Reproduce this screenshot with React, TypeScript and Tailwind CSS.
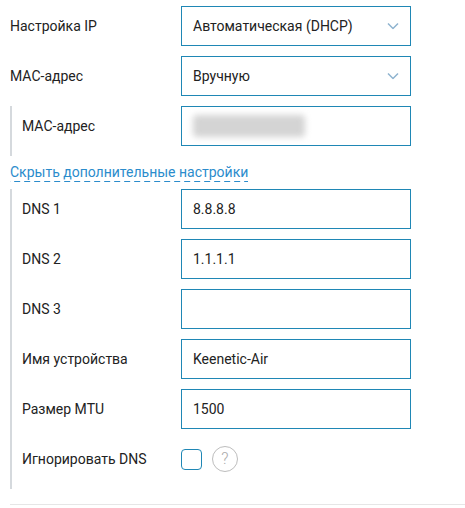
import React from "react";

const font = { fontFamily: "Roboto, 'Noto Sans', sans-serif" };

function Chevron() {
  return (
    <svg width="12" height="7" viewBox="0 0 12 7" className="absolute right-[11px] top-1/2 -translate-y-1/2">
      <path d="M1 1 L6 6 L11 1" fill="none" stroke="#8fb3cf" strokeWidth="1.5" />
    </svg>
  );
}

function Box({ children, select }: { children?: React.ReactNode; select?: boolean }) {
  return (
    <div className="relative w-[230px] h-[40px] border border-[#1f87b5] flex items-center pl-[11px] text-[14px] text-[#222]">
      {children}
      {select && <Chevron />}
    </div>
  );
}

function Row({ label, children, indent }: { label: string; children: React.ReactNode; indent?: boolean }) {
  return (
    <div className="flex items-center h-[40px] shrink-0">
      <div className={`${indent ? "w-[159px]" : "w-[171px]"} text-[14px] text-[#222]`}>{label}</div>
      {children}
    </div>
  );
}

export default function App() {
  return (
    <div className="w-[465px] h-[508px] bg-white pt-[6px] flex flex-col" style={font}>
      <div className="pl-[10px] flex flex-col">
        <div className="flex flex-col gap-[10px]">
          <Row label="Настройка IP">
            <Box select>Автоматическая (DHCP)</Box>
          </Row>
          <Row label="МАС-адрес">
            <Box select>Вручную</Box>
          </Row>
          <div className="border-l-2 border-[#d5d9dd] pl-[10px] pb-[10px] flex flex-col">
            <Row label="МАС-адрес" indent>
              <Box>
                <div className="w-[112px] h-[22px] bg-[#d4d4d4] rounded-[4px] blur-[3px]" />
              </Box>
            </Row>
          </div>
        </div>
        <div className="h-[33px] flex items-center">
          <span className="text-[14px] text-[#2b8ccc] leading-[17px] pb-[1px] bg-[linear-gradient(to_right,#2b8ccc_60%,transparent_0)] bg-[length:10px_1px] bg-repeat-x bg-bottom">
            Скрыть дополнительные настройки
          </span>
        </div>
        <div className="border-l-2 border-[#d5d9dd] pl-[10px] pb-[10px] flex flex-col gap-[10px]">
          <Row label="DNS 1" indent>
            <Box>8.8.8.8</Box>
          </Row>
          <Row label="DNS 2" indent>
            <Box>1.1.1.1</Box>
          </Row>
          <Row label="DNS 3" indent>
            <Box />
          </Row>
          <Row label="Имя устройства" indent>
            <Box>Keenetic-Air</Box>
          </Row>
          <Row label="Размер MTU" indent>
            <Box>1500</Box>
          </Row>
          <Row label="Игнорировать DNS" indent>
            <div className="flex items-center gap-[10px]">
              <div className="w-[21px] h-[21px] border-[1.5px] border-[#1f87b5] rounded-[4px]" />
              <div className="w-[26px] h-[26px] rounded-full border-[1.5px] border-[#bdbdbd] flex items-center justify-center text-[16px] text-[#aaa] font-light">
                ?
              </div>
            </div>
          </Row>
        </div>
        <div className="mt-[15px] border-t border-[#e6e6e6]" />
      </div>
    </div>
  );
}
